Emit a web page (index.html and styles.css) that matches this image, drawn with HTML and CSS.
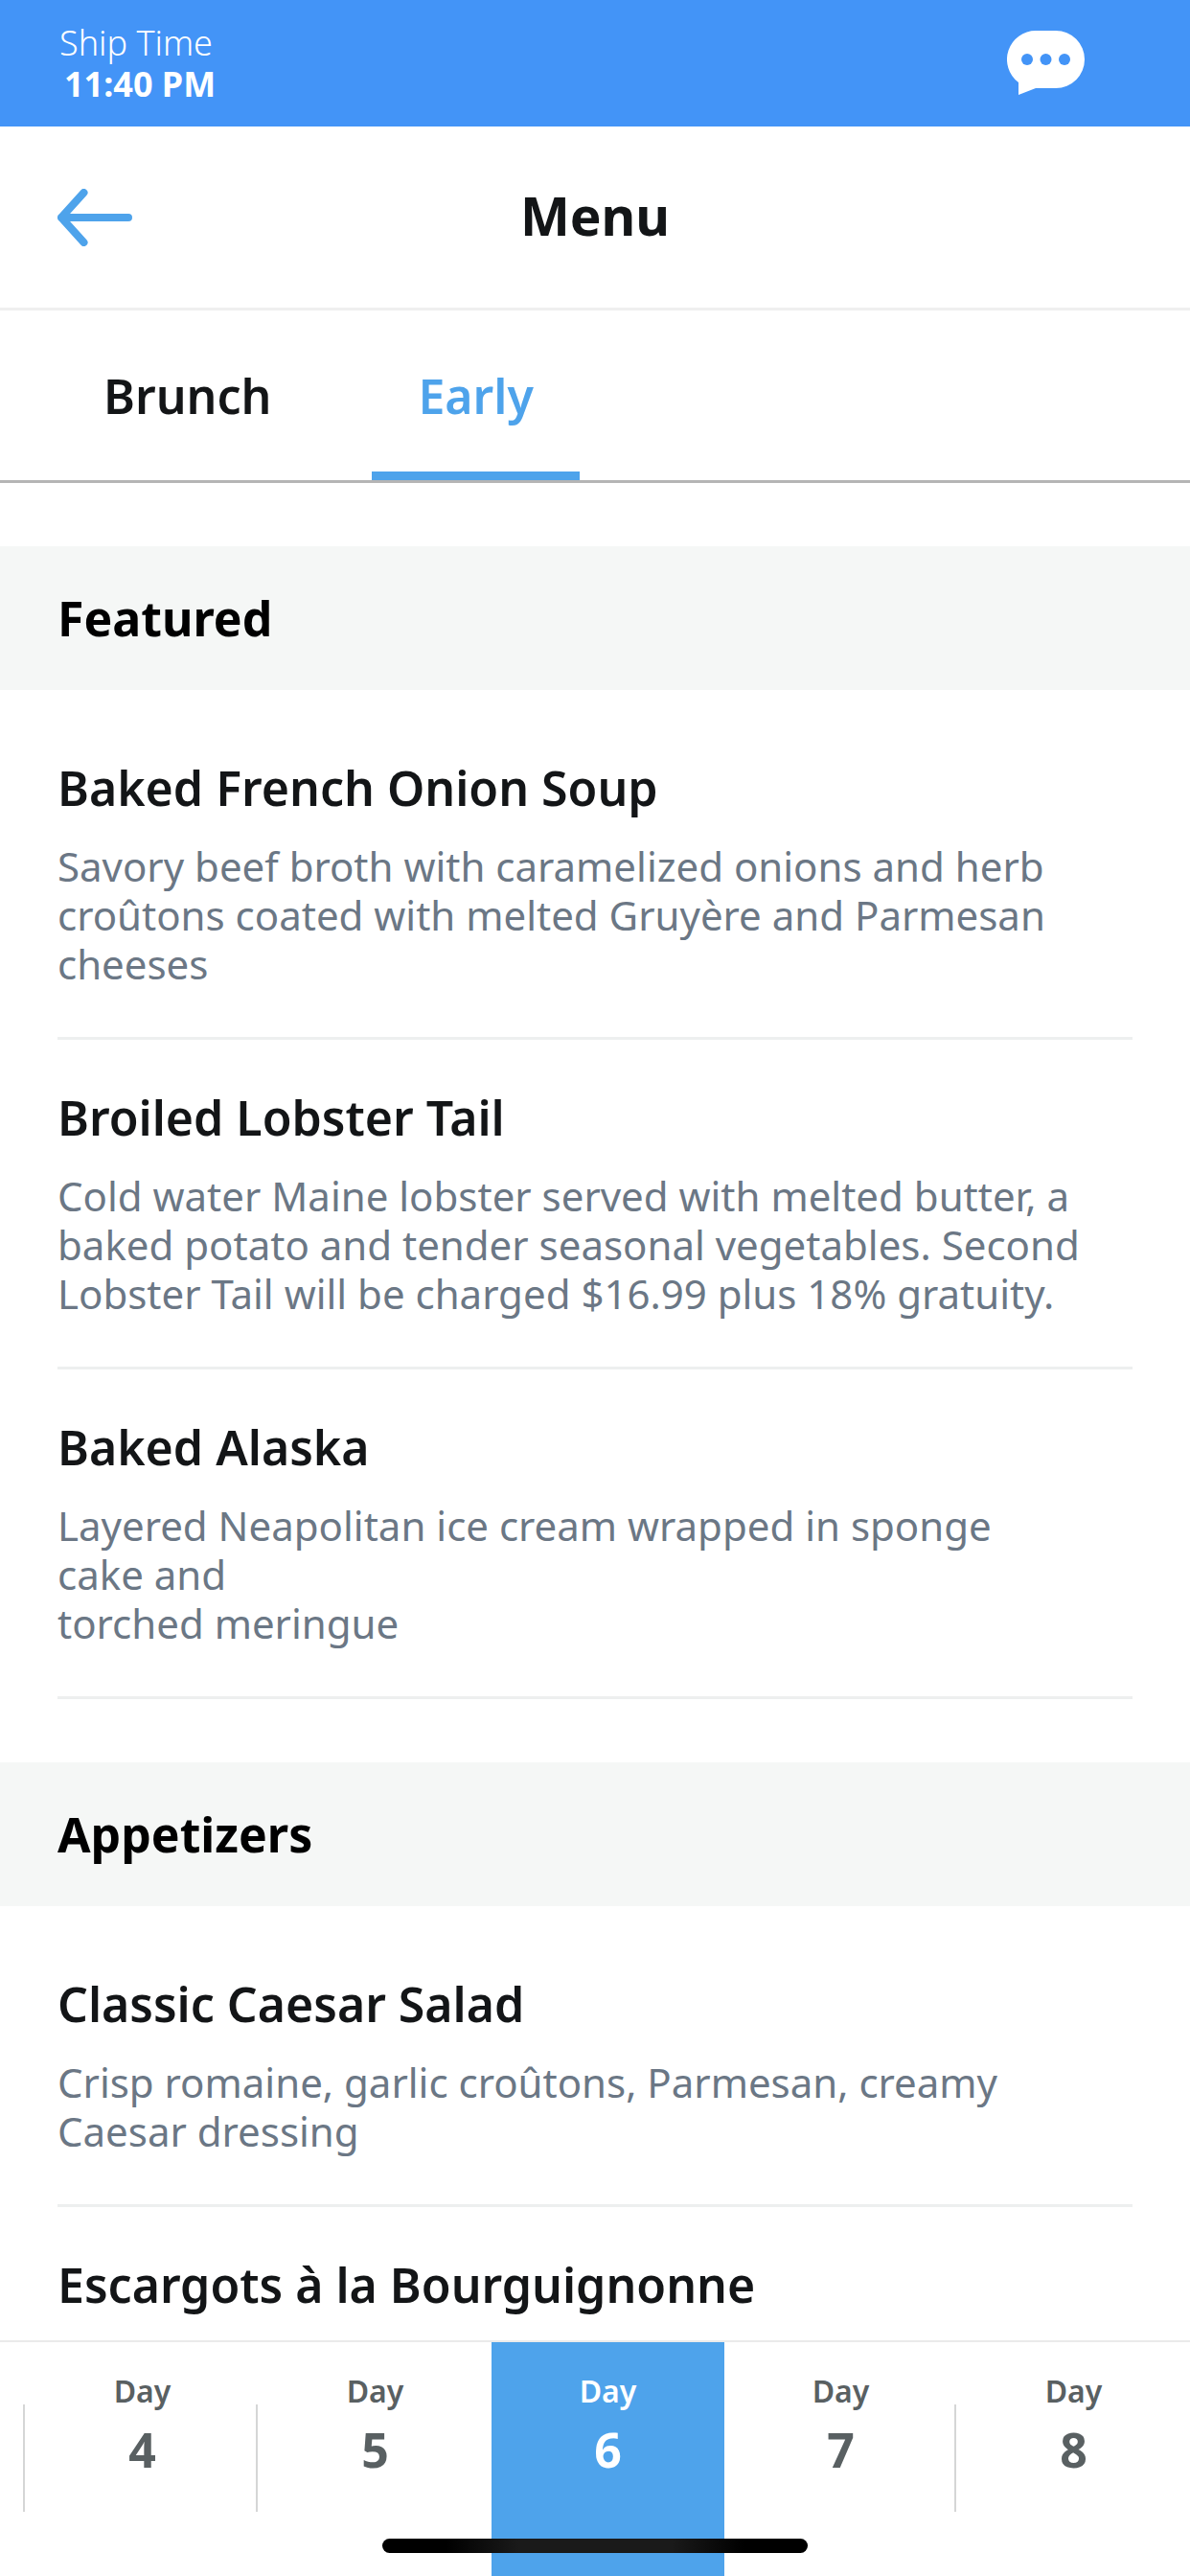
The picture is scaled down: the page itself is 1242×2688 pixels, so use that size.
FILE: index.html
```html
<!DOCTYPE html>
<html lang="en">
<head>
    <meta charset="UTF-8">
    <meta name="viewport" content="width=device-width, initial-scale=1">
    <title>Menu</title>
    <link rel="stylesheet" href="styles.css">
</head>
<body>
    <div class="shipBar">
        <div class="shipTime">
            <span>Ship Time</span>
            <strong>11:40 PM</strong>
        </div>
        <button class="chatButton" type="button" aria-label="Chat">
            <svg width="81" height="68" viewBox="0 0 81 68">
                <path fill="#fff" d="M30 0H51A30 30 0 0 1 51 60H30L12 67V54A30 30 0 0 1 30 0Z"/>
                <circle cx="21" cy="30" r="6"/>
                <circle cx="40.5" cy="30" r="6"/>
                <circle cx="60" cy="30" r="6"/>
            </svg>
        </button>
    </div>

    <header>
        <button class="backButton" type="button" aria-label="Back">
            <svg width="78" height="60" viewBox="0 0 78 60">
                <path d="M27.5 4L4 30L27.5 56M4 30H74"/>
            </svg>
        </button>
        <h1>Menu</h1>
    </header>

    <nav class="tabs">
        <button class="tab" type="button">Brunch</button>
        <button class="tab active" type="button">Early</button>
    </nav>

    <main>
        <section>
            <h2>Featured</h2>
            <ul class="dishList">
                <li>
                    <h3>Baked French Onion Soup</h3>
                    <p>Savory beef broth with caramelized onions and herb croûtons coated with melted Gruyère and Parmesan cheeses</p>
                </li>
                <li>
                    <h3>Broiled Lobster Tail</h3>
                    <p>Cold water Maine lobster served with melted butter, a baked potato and tender seasonal vegetables. Second Lobster Tail will be charged $16.99 plus 18% gratuity.</p>
                </li>
                <li>
                    <h3>Baked Alaska</h3>
                    <p>Layered Neapolitan ice cream wrapped in sponge<br>cake and<br>torched meringue</p>
                </li>
            </ul>
        </section>

        <section>
            <h2>Appetizers</h2>
            <ul class="dishList">
                <li>
                    <h3>Classic Caesar Salad</h3>
                    <p>Crisp romaine, garlic croûtons, Parmesan, creamy Caesar dressing</p>
                </li>
                <li>
                    <h3>Escargots à la Bourguignonne</h3>
                </li>
            </ul>
        </section>
    </main>

    <footer>
        <nav class="days">
            <a class="day divider" href="#day4">Day <b>4</b></a>
            <a class="day divider" href="#day5">Day <b>5</b></a>
            <a class="day active" href="#day6">Day <b>6</b></a>
            <a class="day" href="#day7">Day <b>7</b></a>
            <a class="day divider" href="#day8">Day <b>8</b></a>
        </nav>
        <div class="homeIndicator"></div>
    </footer>
</body>
</html>
```

FILE: styles.css
```css
* {
    box-sizing: border-box;
}

body {
    font-family: "Noto Sans", sans-serif;
    background-color: #fff;
    color: #131517;
    margin: 0;
    height: 100vh;
    display: flex;
    flex-direction: column;
    overflow: hidden;
}

h1, h2, h3, p, ul {
    margin: 0;
    padding: 0;
}

button {
    background: none;
    border: none;
    padding: 0;
    font-family: inherit;
    color: inherit;
    cursor: pointer;
}

svg {
    display: block;
}

.shipBar {
    flex: none;
    display: flex;
    align-items: center;
    justify-content: space-between;
    height: 132px;
    padding: 0 110px 0 62px;
    background-color: #4394f7;
    color: #fff;
}

.shipTime {
    display: flex;
    flex-direction: column;
    font-size: 36px;
    font-weight: 300;
    line-height: 43px;
}

.shipTime strong {
    padding-left: 5px;
    font-weight: 700;
}

.chatButton circle {
    fill: #4394f7;
}

header {
    flex: none;
    display: grid;
    grid-template-columns: 1fr auto 1fr;
    align-items: center;
    height: 192px;
    padding: 0 60px;
    border-bottom: 3px solid #efefef;
}

.backButton {
    justify-self: start;
}

.backButton path {
    fill: none;
    stroke: #4ea3eb;
    stroke-width: 8;
    stroke-linecap: round;
    stroke-linejoin: round;
}

h1 {
    padding-bottom: 3px;
    font-size: 55px;
    font-weight: 700;
    line-height: 60px;
}

.tabs {
    flex: none;
    display: flex;
    gap: 57px;
    height: 180px;
    padding: 0 60px;
    border-bottom: 3px solid #b5b5b5;
}

.tab {
    padding: 0 48px;
    font-size: 50px;
    font-weight: 600;
}

.tab.active {
    color: #4ea3eb;
    box-shadow: inset 0 -9px #4ea3eb;
}

main {
    flex: 1;
    min-height: 0;
    overflow: hidden;
}

section {
    padding-top: 66px;
}

h2 {
    background-color: #f5f7f6;
    color: #000;
    padding: 0 60px;
    font-size: 50px;
    font-weight: 700;
    line-height: 150px;
}

.dishList {
    list-style: none;
    padding: 21px 60px 0;
}

.dishList li {
    padding: 51px 0;
    border-bottom: 3px solid #edefef;
}

h3 {
    font-size: 50px;
    font-weight: 600;
    line-height: 60px;
}

.dishList p {
    margin-top: 26px;
    color: #6b7785;
    font-size: 42px;
    line-height: 51px;
}

footer {
    flex: none;
    position: relative;
    background-color: #fff;
    border-top: 2px solid #ebebeb;
}

.days {
    display: flex;
    padding-left: 27px;
}

.day {
    flex: 1;
    position: relative;
    height: 244px;
    padding-top: 31px;
    color: #596062;
    font-size: 32px;
    font-weight: 600;
    line-height: 40px;
    text-align: center;
    text-decoration: none;
}

.day b {
    display: block;
    margin-top: 11px;
    font-size: 50px;
    font-weight: 700;
    line-height: 60px;
}

.day.active {
    background-color: #4ea3eb;
    color: #fff;
}

.divider::before {
    content: "";
    position: absolute;
    left: -3px;
    top: 65px;
    width: 2px;
    height: 112px;
    background-color: #d5d6d6;
}

/* lies over the day bar */
.homeIndicator {
    position: absolute;
    bottom: 24px;
    left: 50%;
    width: 444px;
    height: 15px;
    margin-left: -222px;
    border-radius: 8px;
    background: linear-gradient(to right, #000 15%, #1a1a1a 32%, #1a1a1a 68%, #000 85%);
}
```
